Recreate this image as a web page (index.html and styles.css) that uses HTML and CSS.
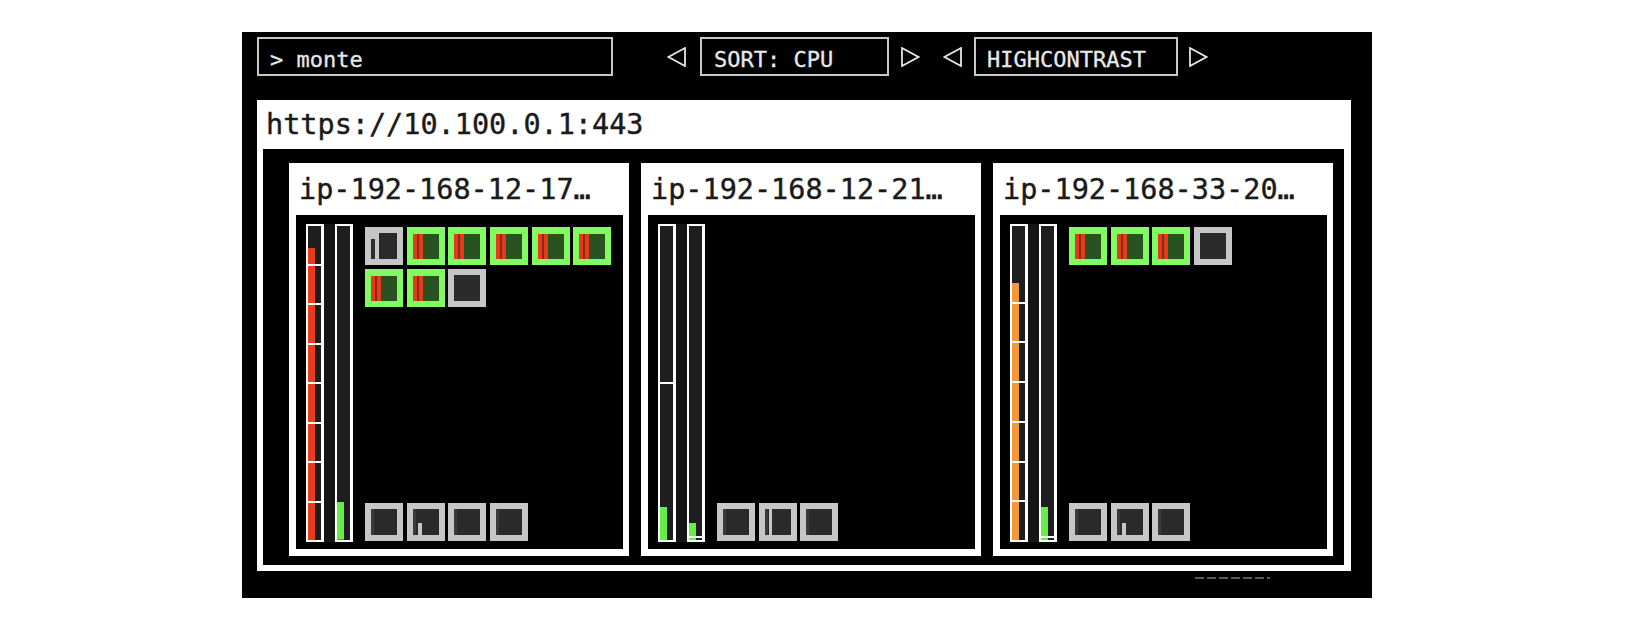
FILE: index.html
```html
<!DOCTYPE html>
<html>
<head>
<meta charset="utf-8">
<link rel="stylesheet" href="styles.css">
</head>
<body>
<div class="frame">
  <div class="topbar">
    <div class="tbox search">&gt; monte</div>
    <div class="ctrls">
      <svg class="arrow" viewBox="0 0 19 20"><polygon points="18,1 1.5,10 18,19"/></svg>
      <div class="tbox sort">SORT: CPU</div>
      <svg class="arrow a2" viewBox="0 0 19 20"><polygon points="1,1 17.5,10 1,19"/></svg>
      <svg class="arrow a3" viewBox="0 0 19 20"><polygon points="18,1 1.5,10 18,19"/></svg>
      <div class="tbox theme">HIGHCONTRAST</div>
      <svg class="arrow a4" viewBox="0 0 19 20"><polygon points="1,1 17.5,10 1,19"/></svg>
    </div>
  </div>

  <div class="panel">
    <div class="url">https://10.100.0.1:443</div>
    <div class="nodes">

      <div class="card">
        <div class="title">ip-192-168-12-17…</div>
        <div class="body">
          <div class="bars">
            <div class="bar red" style="--fill:93%"><i></i><i></i><i></i><i></i><i></i><i></i><i></i><i></i></div>
            <div class="bar green" style="--fill:12%"><i></i></div>
          </div>
          <div class="pods">
            <div class="grid">
              <div class="sq k step"></div>
              <div class="sq g"></div>
              <div class="sq g"></div>
              <div class="sq g"></div>
              <div class="sq g"></div>
              <div class="sq g"></div>
              <div class="sq g"></div>
              <div class="sq g"></div>
              <div class="sq k"></div>
            </div>
            <div class="row">
              <div class="sq k edge"></div>
              <div class="sq k notch"></div>
              <div class="sq k edge"></div>
              <div class="sq k edge"></div>
            </div>
          </div>
        </div>
      </div>

      <div class="card">
        <div class="title">ip-192-168-12-21…</div>
        <div class="body">
          <div class="bars">
            <div class="bar green" style="--fill:10.5%"><i></i><i></i></div>
            <div class="bar green" style="--fill:5.5%"><i></i><i class="sm"></i></div>
          </div>
          <div class="pods">
            <div class="grid"></div>
            <div class="row">
              <div class="sq k edge"></div>
              <div class="sq k stripe"></div>
              <div class="sq k edge"></div>
            </div>
          </div>
        </div>
      </div>

      <div class="card">
        <div class="title">ip-192-168-33-20…</div>
        <div class="body">
          <div class="bars">
            <div class="bar orange" style="--fill:82%"><i class="s2"></i><i></i><i></i><i></i><i></i><i></i><i></i></div>
            <div class="bar green" style="--fill:10.5%"><i></i><i class="sm"></i></div>
          </div>
          <div class="pods">
            <div class="grid">
              <div class="sq g"></div>
              <div class="sq g"></div>
              <div class="sq g"></div>
              <div class="sq k"></div>
            </div>
            <div class="row">
              <div class="sq k edge"></div>
              <div class="sq k notch"></div>
              <div class="sq k edge"></div>
            </div>
          </div>
        </div>
      </div>

    </div>
  </div>
  <div class="footnote"></div>
</div>
</body>
</html>
```

FILE: styles.css
```css
* { box-sizing: border-box; }

body {
  margin: 0;
  background: #ffffff;
  font-family: "DejaVu Sans Mono", "Liberation Mono", monospace;
}

.frame {
  margin: 32px 0 0 242px;
  width: 1130px;
  height: 566px;
  background: #000;
  padding: 5px 0 0 15px;
}

.topbar {
  display: flex;
  align-items: center;
  height: 39px;
}

.tbox {
  height: 39px;
  border: 2px solid #c8c8c8;
  color: #e8e8e8;
  font-size: 22px;
  line-height: 29px;
  padding: 6px 0 0 11px;
  white-space: nowrap;
  -webkit-text-stroke: 0.3px currentColor;
}

.search { width: 356px; }

.ctrls {
  display: flex;
  align-items: center;
  margin-left: 54px;
  padding-top: 0;
}

.arrow {
  width: 19px;
  height: 20px;
  display: block;
}
.arrow polygon {
  fill: none;
  stroke: #e6e6e6;
  stroke-width: 1.8;
  stroke-linejoin: miter;
}

.sort { width: 189px; margin-left: 14px; padding-left: 12px; }
.a2 { margin-left: 12px; }
.a3 { margin-left: 23px; }
.theme { width: 204px; margin-left: 12px; padding-left: 11px; }
.a4 { margin-left: 11px; }

.panel {
  margin-top: 24px;
  width: 1094px;
  height: 471px;
  background: #fff;
  padding: 0 7px 6px 6px;
  display: flex;
  flex-direction: column;
}

.url {
  height: 49px;
  font-size: 28.5px;
  line-height: 49px;
  color: #1a1a1a;
  padding-left: 3px;
  white-space: nowrap;
  -webkit-text-stroke: 0.4px currentColor;
}

.nodes {
  flex: 1;
  background: #000;
  display: flex;
  gap: 12px;
  padding: 14px 10px 9px 26px;
}

.card {
  width: 340px;
  background: #fff;
  padding: 0 6px 7px 7px;
  display: flex;
  flex-direction: column;
}

.title {
  height: 52px;
  padding: 2px 0 0 3px;
  font-size: 28.5px;
  line-height: 50px;
  color: #1a1a1a;
  white-space: nowrap;
  overflow: hidden;
  -webkit-text-stroke: 0.4px currentColor;
}

.body {
  flex: 1;
  background: #000;
  display: flex;
  padding: 9px 0 0 10px;
}

.bars {
  display: flex;
  gap: 11px;
  height: 318px;
  background: #151515;
}

.bar {
  width: 18px;
  height: 100%;
  border: 2px solid #fff;
  border-right-width: 3px;
  display: flex;
  flex-direction: column;
  background: linear-gradient(var(--c), var(--c)) left bottom / 55% var(--fill) no-repeat, #1e1e1e;
}
.bar.red { --c: #ea3a1f; }
.bar.green { --c: #66ee46; }
.bar.orange { --c: #f39a34; }

.bar i { flex: 1 1 0; display: block; }
.bar i + i { border-top: 2px solid #fff; }
.bar i.s2 { flex: 2 1 0; }
.bar i.sm { flex: 0 0 4px; }

.pods {
  margin-left: 12px;
  width: 247px;
  height: 318px;
  padding: 3px 0 1px;
  display: flex;
  flex-direction: column;
  justify-content: space-between;
}

.grid {
  display: flex;
  flex-wrap: wrap;
  gap: 4px 3.7px;
}

.row {
  display: flex;
  gap: 3.7px;
}

.sq {
  width: 38px;
  height: 38px;
  border: 6px solid;
  flex: none;
}

.sq.g {
  border-color: #80fc62;
  border-top-width: 7px;
  background:
    linear-gradient(to right, #e33a1e 0 4px, #8a2a12 4px 6px, #e33a1e 6px 10px, transparent 10px) no-repeat,
    #2a5221;
}

.sq.k {
  border-color: #c6c6c6;
  background: #2b2b2b;
}

.sq.k.edge {
  background:
    linear-gradient(#3b3b3b, #3b3b3b) 0 0 / 3px 100% no-repeat,
    #2b2b2b;
}

.sq.k.step {
  background:
    linear-gradient(#c6c6c6, #c6c6c6) 0 0 / 8px 6px no-repeat,
    linear-gradient(#c6c6c6, #c6c6c6) 4px 0 / 4px 100% no-repeat,
    #2b2b2b;
}

.sq.k.notch {
  background:
    linear-gradient(#3b3b3b, #3b3b3b) 0 0 / 3px 100% no-repeat,
    linear-gradient(#c6c6c6, #c6c6c6) 5px 100% / 4px 12px no-repeat,
    #2b2b2b;
}

.sq.k.stripe {
  background:
    linear-gradient(#3b3b3b, #3b3b3b) 0 0 / 3px 100% no-repeat,
    linear-gradient(#c6c6c6, #c6c6c6) 4px 0 / 3px 100% no-repeat,
    #2b2b2b;
}

.footnote {
  margin: 6px 0 0 938px;
  width: 75px;
  height: 2px;
  background: repeating-linear-gradient(to right, #5a5a5a 0 9px, transparent 9px 12px);
}
```
